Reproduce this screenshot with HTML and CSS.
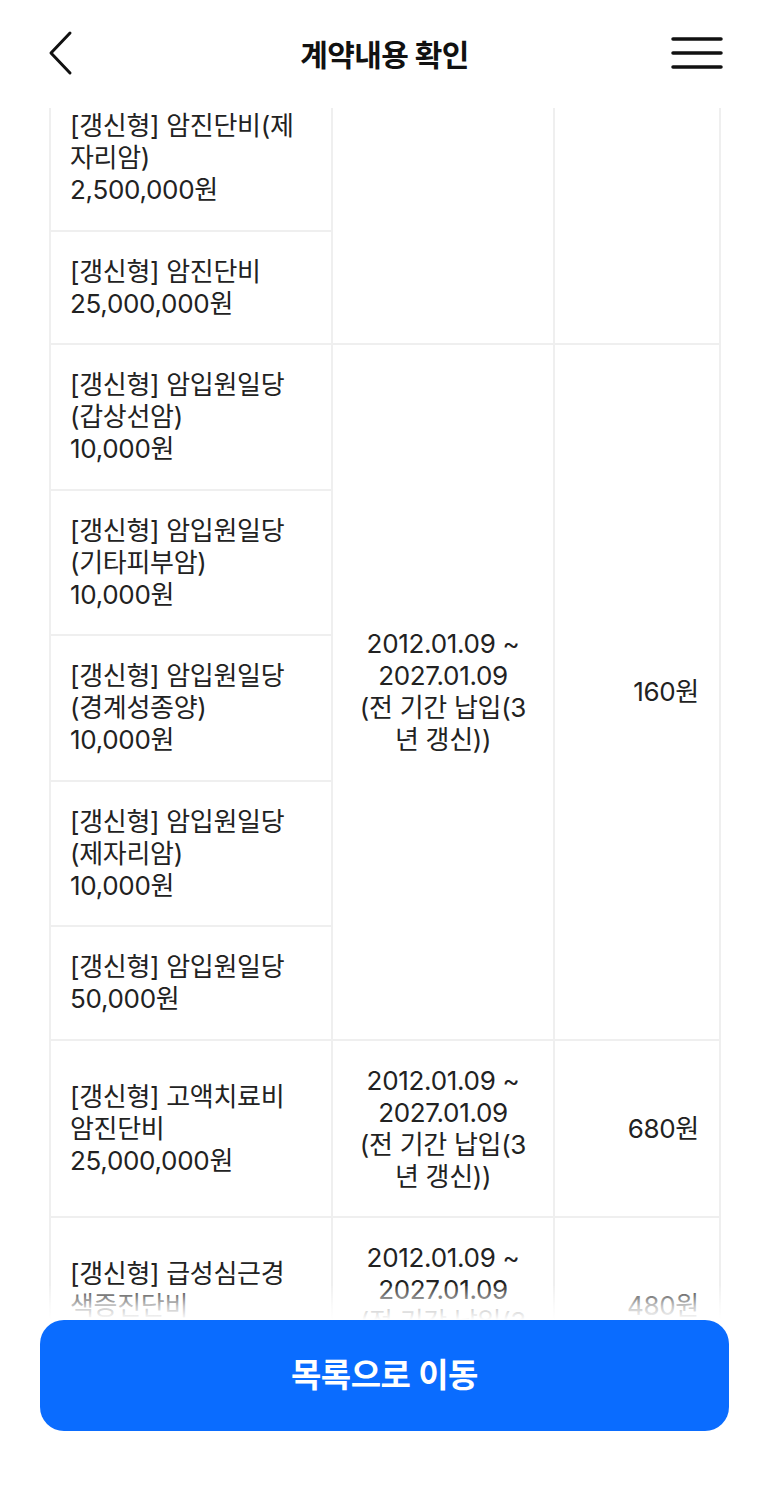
FILE: index.html
```html
<!DOCTYPE html>
<html lang="ko">
<head>
    <meta charset="UTF-8">
    <meta name="viewport" content="width=device-width, initial-scale=1.0">
    <title>계약내용 확인</title>
    <link rel="stylesheet" href="styles.css">
</head>
<body>
    <div class="page">
        <header class="top-bar">
            <button class="icon-btn" aria-label="뒤로">
                <svg width="30" height="46" viewBox="0 0 30 46">
                    <path d="M24 3 L5 23 L24 43" fill="none" stroke="#111" stroke-width="3" stroke-linecap="round" stroke-linejoin="round"/>
                </svg>
            </button>
            <h1 class="title">계약내용 확인</h1>
            <button class="icon-btn icon-btn-right" aria-label="메뉴">
                <svg width="52" height="36" viewBox="0 0 52 36">
                    <path d="M2 4 H50 M2 18 H50 M2 32 H50" fill="none" stroke="#111" stroke-width="3.5" stroke-linecap="round"/>
                </svg>
            </button>
        </header>

        <main class="content">
            <table class="contract-table">
                <colgroup>
                    <col class="col-name">
                    <col class="col-period">
                    <col class="col-price">
                </colgroup>
                <tbody>
                    <tr>
                        <td class="name">[갱신형] 암진단비(제<br>자리암)<br>2,500,000원</td>
                        <td class="period" rowspan="2"></td>
                        <td class="price" rowspan="2"></td>
                    </tr>
                    <tr>
                        <td class="name">[갱신형] 암진단비<br>25,000,000원</td>
                    </tr>

                    <tr>
                        <td class="name">[갱신형] 암입원일당<br>(갑상선암)<br>10,000원</td>
                        <td class="period" rowspan="5">2012.01.09 ~<br>2027.01.09<br>(전 기간 납입(3<br>년 갱신))</td>
                        <td class="price" rowspan="5">160원</td>
                    </tr>
                    <tr>
                        <td class="name">[갱신형] 암입원일당<br>(기타피부암)<br>10,000원</td>
                    </tr>
                    <tr>
                        <td class="name">[갱신형] 암입원일당<br>(경계성종양)<br>10,000원</td>
                    </tr>
                    <tr>
                        <td class="name">[갱신형] 암입원일당<br>(제자리암)<br>10,000원</td>
                    </tr>
                    <tr>
                        <td class="name">[갱신형] 암입원일당<br>50,000원</td>
                    </tr>

                    <tr>
                        <td class="name">[갱신형] 고액치료비<br>암진단비<br>25,000,000원</td>
                        <td class="period">2012.01.09 ~<br>2027.01.09<br>(전 기간 납입(3<br>년 갱신))</td>
                        <td class="price">680원</td>
                    </tr>
                    <tr>
                        <td class="name">[갱신형] 급성심근경<br>색증진단비<br>10,000,000원</td>
                        <td class="period">2012.01.09 ~<br>2027.01.09<br>(전 기간 납입(3<br>년 갱신))</td>
                        <td class="price">480원</td>
                    </tr>
                </tbody>
            </table>
        </main>

        <footer class="bottom-bar">
            <button class="btn-primary">목록으로 이동</button>
        </footer>
    </div>
</body>
</html>
```

FILE: styles.css
```css
:root {
    --primary-color: #0a6cff;
    --text-color: #222;
    --title-color: #111;
    --line-color: #efefef;
}

* {
    margin: 0;
    padding: 0;
    box-sizing: border-box;
}

body {
    font-family: Inter, 'Noto Sans CJK KR', 'Noto Sans', sans-serif;
    background-color: #fff;
    color: var(--text-color);
}

.page {
    width: 769px;
    height: 1500px;
    display: flex;
    flex-direction: column;
}

/* header */
.top-bar {
    height: 108px;
    flex-shrink: 0;
    display: flex;
    align-items: center;
    justify-content: space-between;
    padding: 0 46px 2px 46px;
}

.icon-btn {
    width: 56px;
    background: none;
    border: none;
    display: flex;
    align-items: center;
    cursor: pointer;
}

.icon-btn-right {
    justify-content: flex-end;
}

.title {
    font-size: 30px;
    font-weight: 700;
    color: var(--title-color);
    letter-spacing: -0.6px;
}

/* scroll area */
.content {
    height: 1212px;
    flex-shrink: 0;
    overflow: hidden;
    position: relative;
    padding: 0 48px 0 49px;
}

.content::after {
    content: '';
    position: absolute;
    left: 0;
    right: 0;
    bottom: 0;
    height: 34px;
    background: linear-gradient(rgba(255,255,255,0.1), rgba(255,255,255,0.75) 60%, #fff);
}

.contract-table {
    width: 672px;
    margin-top: -24px;
    border-collapse: collapse;
    table-layout: fixed;
    font-size: 26px;
    line-height: 32px;
    letter-spacing: -0.3px;
}

.col-name {
    width: 282px;
}

.col-period {
    width: 222px;
}

.contract-table td {
    border: 2px solid var(--line-color);
    padding: 24px 19px 23.5px;
    vertical-align: middle;
}

.contract-table .name {
    text-align: left;
}

.contract-table .period {
    text-align: center;
    padding-left: 10px;
    padding-right: 10px;
}

.contract-table .price {
    text-align: right;
    padding-right: 20px;
}

/* bottom button */
.bottom-bar {
    padding: 0 40px;
}

.btn-primary {
    width: 100%;
    height: 111px;
    background-color: var(--primary-color);
    color: #fff;
    border: none;
    border-radius: 24px;
    font-family: inherit;
    font-size: 33px;
    font-weight: 600;
    letter-spacing: -0.5px;
    padding-bottom: 6px;
    cursor: pointer;
}
```
